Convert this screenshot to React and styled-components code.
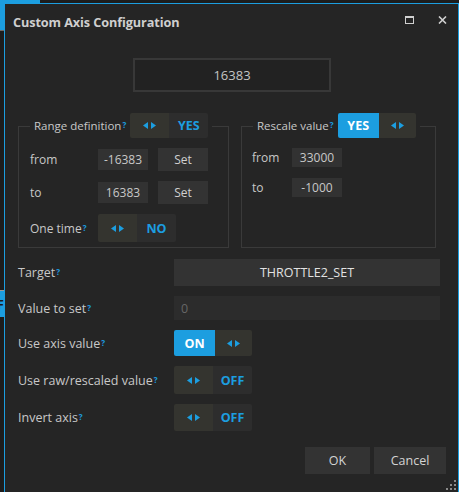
import React from 'react';
import styled, { createGlobalStyle } from 'styled-components';

const BLUE = '#1c9ee0';
const FONT = '"Open Sans", "Noto Sans", sans-serif';

const GlobalStyle = createGlobalStyle`
  html, body {
    margin: 0;
    padding: 0;
    background: #1d1d1d;
  }
`;

const Arrows = () => (
  <svg width="13" height="7" viewBox="0 0 13 7">
    <polygon points="5,0 5,7 0,3.5" fill={BLUE} />
    <polygon points="8,0 8,7 13,3.5" fill={BLUE} />
  </svg>
);

const MaximizeIcon = () => (
  <svg width="9" height="8" viewBox="0 0 9 8">
    <rect x="0.5" y="0.5" width="8" height="7" fill="none" stroke="#d0d0d0" />
    <rect x="0" y="0" width="9" height="2" fill="#d0d0d0" />
  </svg>
);

const CloseIcon = () => (
  <svg width="9" height="8" viewBox="0 0 9 8">
    <path d="M1 0.5 L8 7.5 M8 0.5 L1 7.5" stroke="#d0d0d0" strokeWidth="1.6" />
  </svg>
);

const Grip = () => (
  <svg width="10" height="10" viewBox="0 0 10 10">
    {[[8, 0], [4, 4], [8, 4], [0, 8], [4, 8], [8, 8]].map(([x, y]) => (
      <rect key={`${x}-${y}`} x={x} y={y} width="2" height="2" fill="#8a8a8a" />
    ))}
  </svg>
);

const Toggle = ({ label, active, height }) => (
  <ToggleBox style={{ height }}>
    {active ? (
      <>
        <ToggleLabel active>{label}</ToggleLabel>
        <ToggleArrows narrow><Arrows /></ToggleArrows>
      </>
    ) : (
      <>
        <ToggleArrows><Arrows /></ToggleArrows>
        <ToggleLabel>{label}</ToggleLabel>
      </>
    )}
  </ToggleBox>
);

const Help = () => <HelpMark>?</HelpMark>;

const App = () => (
  <>
    <GlobalStyle />
    <Desktop>
      <BackTile />
      <BackTab>F</BackTab>
      <Window>
        <TitleBar>
          <Title>Custom Axis Configuration</Title>
          <TitleButtons>
            <TitleButton><MaximizeIcon /></TitleButton>
            <TitleButton><CloseIcon /></TitleButton>
          </TitleButtons>
        </TitleBar>

        <Body>
          <ValueDisplay>16383</ValueDisplay>

          <GroupsRow>
            <Group width={211}>
              <GroupHeader>
                <Legend>Range definition<Help /></Legend>
                <Toggle label="YES" height={25} />
              </GroupHeader>
              <RangeGrid>
                <FieldLabel>from</FieldLabel>
                <NumberBox>-16383</NumberBox>
                <SetButton>Set</SetButton>
                <FieldLabel>to</FieldLabel>
                <NumberBox>16383</NumberBox>
                <SetButton>Set</SetButton>
                <FieldLabel>One time<Help /></FieldLabel>
                <Span2><Toggle label="NO" height={28} /></Span2>
              </RangeGrid>
            </Group>

            <Group width={195}>
              <GroupHeader>
                <Legend>Rescale value<Help /></Legend>
                <Toggle label="YES" active height={25} />
              </GroupHeader>
              <RescaleGrid>
                <FieldLabel>from</FieldLabel>
                <NumberBox short>33000</NumberBox>
                <FieldLabel>to</FieldLabel>
                <NumberBox short>-1000</NumberBox>
              </RescaleGrid>
            </Group>
          </GroupsRow>

          <FormRows>
            <FormRow>
              <RowLabel>Target<Help /></RowLabel>
              <WideBox h={27} center>THROTTLE2_SET</WideBox>
            </FormRow>
            <FormRow>
              <RowLabel>Value to set<Help /></RowLabel>
              <WideBox h={24} disabled>0</WideBox>
            </FormRow>
            <FormRow>
              <RowLabel>Use axis value<Help /></RowLabel>
              <Toggle label="ON" active height={26} />
            </FormRow>
            <FormRow>
              <RowLabel>Use raw/rescaled value<Help /></RowLabel>
              <Toggle label="OFF" height={28} />
            </FormRow>
            <FormRow>
              <RowLabel>Invert axis<Help /></RowLabel>
              <Toggle label="OFF" height={27} />
            </FormRow>
          </FormRows>

          <Footer>
            <DialogButton width={65}>OK</DialogButton>
            <DialogButton width={72}>Cancel</DialogButton>
          </Footer>
        </Body>

        <GripCorner><Grip /></GripCorner>
      </Window>
    </Desktop>
  </>
);

const Desktop = styled.div`
  position: relative;
  width: 459px;
  height: 492px;
  overflow: hidden;
  background: #1d1d1d;
  font-family: ${FONT};
`;

/* bits of the windows sitting behind the dialog */
const BackTile = styled.div`
  position: absolute;
  left: 0;
  top: 0;
  width: 40px;
  height: 30px;
  background: ${BLUE};
  border-bottom: 1px solid #6a6a6a;
`;

const BackTab = styled.div`
  position: absolute;
  left: -4px;
  top: 290px;
  width: 8px;
  height: 26px;
  background: ${BLUE};
  color: #1a1a1a;
  font-size: 13px;
  font-weight: 700;
  line-height: 26px;
  text-align: right;
  border-top: 1px solid #9a9a9a;
`;

const Window = styled.div`
  position: absolute;
  left: 4px;
  top: 3px;
  width: 455px;
  height: 500px;
  box-sizing: border-box;
  border: 1px solid ${BLUE};
  background: #252525;
  display: flex;
  flex-direction: column;
`;

const TitleBar = styled.div`
  height: 36px;
  flex: none;
  display: flex;
  align-items: center;
  justify-content: space-between;
  padding-left: 8px;
`;

const Title = styled.div`
  color: #cfcfcf;
  font-size: 12.7px;
  font-weight: 700;
  letter-spacing: -0.1px;
`;

const TitleButtons = styled.div`
  display: flex;
  align-items: center;
  gap: 24px;
  padding-right: 11px;
  margin-top: -4px;
`;

const TitleButton = styled.div`
  display: flex;
  align-items: center;
`;

const Body = styled.div`
  display: flex;
  flex-direction: column;
  padding: 0 12px 0 13px;
`;

const ValueDisplay = styled.div`
  align-self: center;
  margin-top: 18px;
  width: 198px;
  height: 34px;
  box-sizing: border-box;
  border: 2px solid #383838;
  background: #222222;
  color: #c4c4c4;
  font-size: 13px;
  display: flex;
  align-items: center;
  justify-content: center;
`;

const GroupsRow = styled.div`
  display: flex;
  gap: 12px;
  margin-top: 34px;
`;

const Group = styled.div`
  width: ${(p) => p.width}px;
  height: 122px;
  box-sizing: border-box;
  border: 1px solid #3a3a3a;
`;

const GroupHeader = styled.div`
  display: flex;
  align-items: center;
  gap: 4px;
  width: fit-content;
  margin: -14px 0 0 11px;
  padding: 0 4px;
  background: #252525;
`;

const Legend = styled.div`
  color: #c8c8c8;
  font-size: 11.5px;
  white-space: nowrap;
`;

const HelpMark = styled.span`
  color: ${BLUE};
  font-size: 8px;
  font-weight: 700;
  margin-left: 1px;
  vertical-align: 2px;
`;

const ToggleBox = styled.div`
  display: flex;
  width: 78px;
  flex: none;
  border-radius: 2px;
  overflow: hidden;
`;

const ToggleArrows = styled.div`
  width: ${(p) => (p.narrow ? 37 : 39)}px;
  background: #34342f;
  display: flex;
  align-items: center;
  justify-content: center;
`;

const ToggleLabel = styled.div`
  flex: 1;
  display: flex;
  align-items: center;
  justify-content: center;
  font-size: 12.5px;
  font-weight: 700;
  color: ${(p) => (p.active ? '#ffffff' : BLUE)};
  background: ${(p) => (p.active ? BLUE : '#2d2d2d')};
`;

const RangeGrid = styled.div`
  display: grid;
  grid-template-columns: 58px 50px 50px;
  grid-template-rows: 23px 23px 28px;
  column-gap: 10px;
  row-gap: 10px;
  align-items: center;
  margin: 10px 0 0 11px;
`;

const RescaleGrid = styled.div`
  display: grid;
  grid-template-columns: 40px 50px;
  grid-template-rows: 19px 19px;
  row-gap: 11px;
  align-items: center;
  margin: 10px 0 0 10px;
`;

const FieldLabel = styled.div`
  color: #c8c8c8;
  font-size: 12px;
  white-space: nowrap;
`;

const NumberBox = styled.div`
  height: ${(p) => (p.short ? 19 : 21)}px;
  background: #323232;
  color: #c8c8c8;
  font-size: 12px;
  display: flex;
  align-items: center;
  justify-content: center;
`;

const SetButton = styled.div`
  height: 23px;
  background: #333333;
  color: #d0d0d0;
  font-size: 12px;
  display: flex;
  align-items: center;
  justify-content: center;
`;

const Span2 = styled.div`
  grid-column: span 2;
`;

const FormRows = styled.div`
  display: flex;
  flex-direction: column;
  gap: 10px;
  margin-top: 11px;
`;

const FormRow = styled.div`
  display: flex;
  align-items: center;
`;

const RowLabel = styled.div`
  width: 156px;
  flex: none;
  color: #c8c8c8;
  font-size: 12.5px;
  white-space: nowrap;
`;

const WideBox = styled.div`
  width: 266px;
  height: ${(p) => p.h}px;
  box-sizing: border-box;
  background: ${(p) => (p.disabled ? '#2c2c2c' : '#333333')};
  color: ${(p) => (p.disabled ? '#666666' : '#e2e2e2')};
  font-size: 12.5px;
  display: flex;
  align-items: center;
  justify-content: ${(p) => (p.center ? 'center' : 'flex-start')};
  padding-left: ${(p) => (p.center ? 0 : 7)}px;
`;

const Footer = styled.div`
  display: flex;
  justify-content: flex-end;
  gap: 4px;
  margin-top: 16px;
`;

const DialogButton = styled.div`
  width: ${(p) => p.width}px;
  height: 27px;
  background: #333333;
  color: #d4d4d4;
  font-size: 12.5px;
  display: flex;
  align-items: center;
  justify-content: center;
`;

const GripCorner = styled.div`
  position: absolute;
  left: 441px;
  top: 476px;
  display: flex;
`;

export default App;
